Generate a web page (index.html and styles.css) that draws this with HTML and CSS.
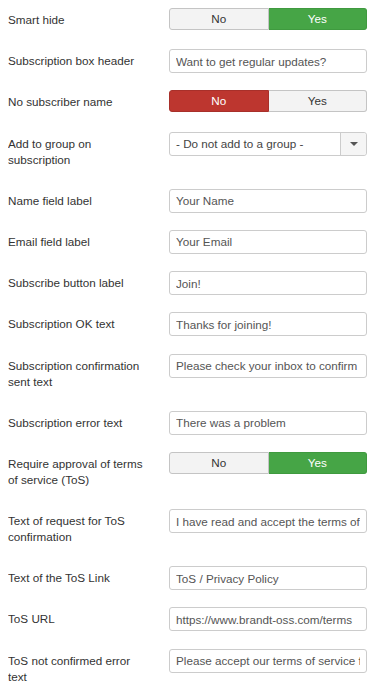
FILE: index.html
```html
<!DOCTYPE html>
<html lang="en">

<head>
  <meta charset="UTF-8">
  <meta name="viewport" content="width=device-width, initial-scale=1.0">
  <title>Newsletter module options</title>
  <link rel="stylesheet" href="styles.css">
</head>

<body>
  <form class="options">
    <div class="control-group">
      <label class="control-label">Smart hide</label>
      <div class="controls">
        <div class="btn-group">
          <span class="btn">No</span>
          <span class="btn btn-yes">Yes</span>
        </div>
      </div>
    </div>
    <div class="control-group">
      <label class="control-label">Subscription box header</label>
      <div class="controls"><input type="text" value="Want to get regular updates?"></div>
    </div>
    <div class="control-group">
      <label class="control-label">No subscriber name</label>
      <div class="controls">
        <div class="btn-group">
          <span class="btn btn-no">No</span>
          <span class="btn">Yes</span>
        </div>
      </div>
    </div>
    <div class="control-group">
      <label class="control-label">Add to group on subscription</label>
      <div class="controls">
        <div class="select">
          <span class="select-text">- Do not add to a group -</span>
          <span class="select-arrow"><i class="caret"></i></span>
        </div>
      </div>
    </div>
    <div class="control-group">
      <label class="control-label">Name field label</label>
      <div class="controls"><input type="text" value="Your Name"></div>
    </div>
    <div class="control-group">
      <label class="control-label">Email field label</label>
      <div class="controls"><input type="text" value="Your Email"></div>
    </div>
    <div class="control-group">
      <label class="control-label">Subscribe button label</label>
      <div class="controls"><input type="text" value="Join!"></div>
    </div>
    <div class="control-group">
      <label class="control-label">Subscription OK text</label>
      <div class="controls"><input type="text" value="Thanks for joining!"></div>
    </div>
    <div class="control-group">
      <label class="control-label">Subscription confirmation sent text</label>
      <div class="controls"><input type="text" value="Please check your inbox to confirm your subscription"></div>
    </div>
    <div class="control-group">
      <label class="control-label">Subscription error text</label>
      <div class="controls"><input type="text" value="There was a problem"></div>
    </div>
    <div class="control-group">
      <label class="control-label">Require approval of terms of service (ToS)</label>
      <div class="controls">
        <div class="btn-group">
          <span class="btn">No</span>
          <span class="btn btn-yes">Yes</span>
        </div>
      </div>
    </div>
    <div class="control-group">
      <label class="control-label">Text of request for ToS confirmation</label>
      <div class="controls"><input type="text" value="I have read and accept the terms of service"></div>
    </div>
    <div class="control-group">
      <label class="control-label">Text of the ToS Link</label>
      <div class="controls"><input type="text" value="ToS / Privacy Policy"></div>
    </div>
    <div class="control-group">
      <label class="control-label">ToS URL</label>
      <div class="controls"><input type="text" value="https://www.brandt-oss.com/terms"></div>
    </div>
    <div class="control-group">
      <label class="control-label">ToS not confirmed error text</label>
      <div class="controls"><input type="text" value="Please accept our terms of service first"></div>
    </div>
  </form>
</body>

</html>
```

FILE: styles.css
```css
body {
  margin: 8px;
  background: #fff;
  font-family: "Liberation Sans", Arial, sans-serif;
  font-size: 11.7px;
  color: #333;
}

.options {
  display: flex;
  flex-direction: column;
  gap: 17.2px;
}

.control-group {
  display: flex;
  align-items: flex-start;
}

.control-label {
  width: 140px;
  margin-right: 21px;
  padding: 4px 0;
  line-height: 16px;
}

.controls {
  width: 198px;
}

.controls input {
  box-sizing: border-box;
  width: 100%;
  height: 24px;
  margin: 0;
  padding: 0 6px;
  border: 1px solid #ccc;
  border-radius: 3px;
  background: #fff;
  font-family: "Liberation Sans", Arial, sans-serif;
  font-size: 11.7px;
  color: #555;
  outline: none;
}

.btn-group {
  display: flex;
  height: 22px;
}

.btn-group .btn {
  flex: 1;
  line-height: 20px;
  text-align: center;
  color: #333;
  background: #f3f3f3;
  border: 1px solid #c4c4c4;
}

.btn-group .btn:first-child {
  border-radius: 3px 0 0 3px;
}

.btn-group .btn:last-child {
  border-left: none;
  border-radius: 0 3px 3px 0;
}

.btn-group .btn-yes {
  background: #46a546;
  border-color: #3f9a3f;
  color: #fff;
}

.btn-group .btn-no {
  background: #bd362f;
  border-color: #a8302a;
  color: #fff;
}

.select {
  display: flex;
  height: 24px;
  box-sizing: border-box;
  border: 1px solid #ccc;
  border-radius: 3px;
  background: #fff;
  color: #444;
}

.select-text {
  flex: 1;
  line-height: 22px;
  padding-left: 6px;
}

.select-arrow {
  width: 25px;
  display: flex;
  align-items: center;
  justify-content: center;
  background: #f5f5f5;
  border-left: 1px solid #ccc;
  border-radius: 0 3px 3px 0;
}

.caret {
  width: 0;
  height: 0;
  border-left: 4px solid transparent;
  border-right: 4px solid transparent;
  border-top: 4px solid #555;
}
```
